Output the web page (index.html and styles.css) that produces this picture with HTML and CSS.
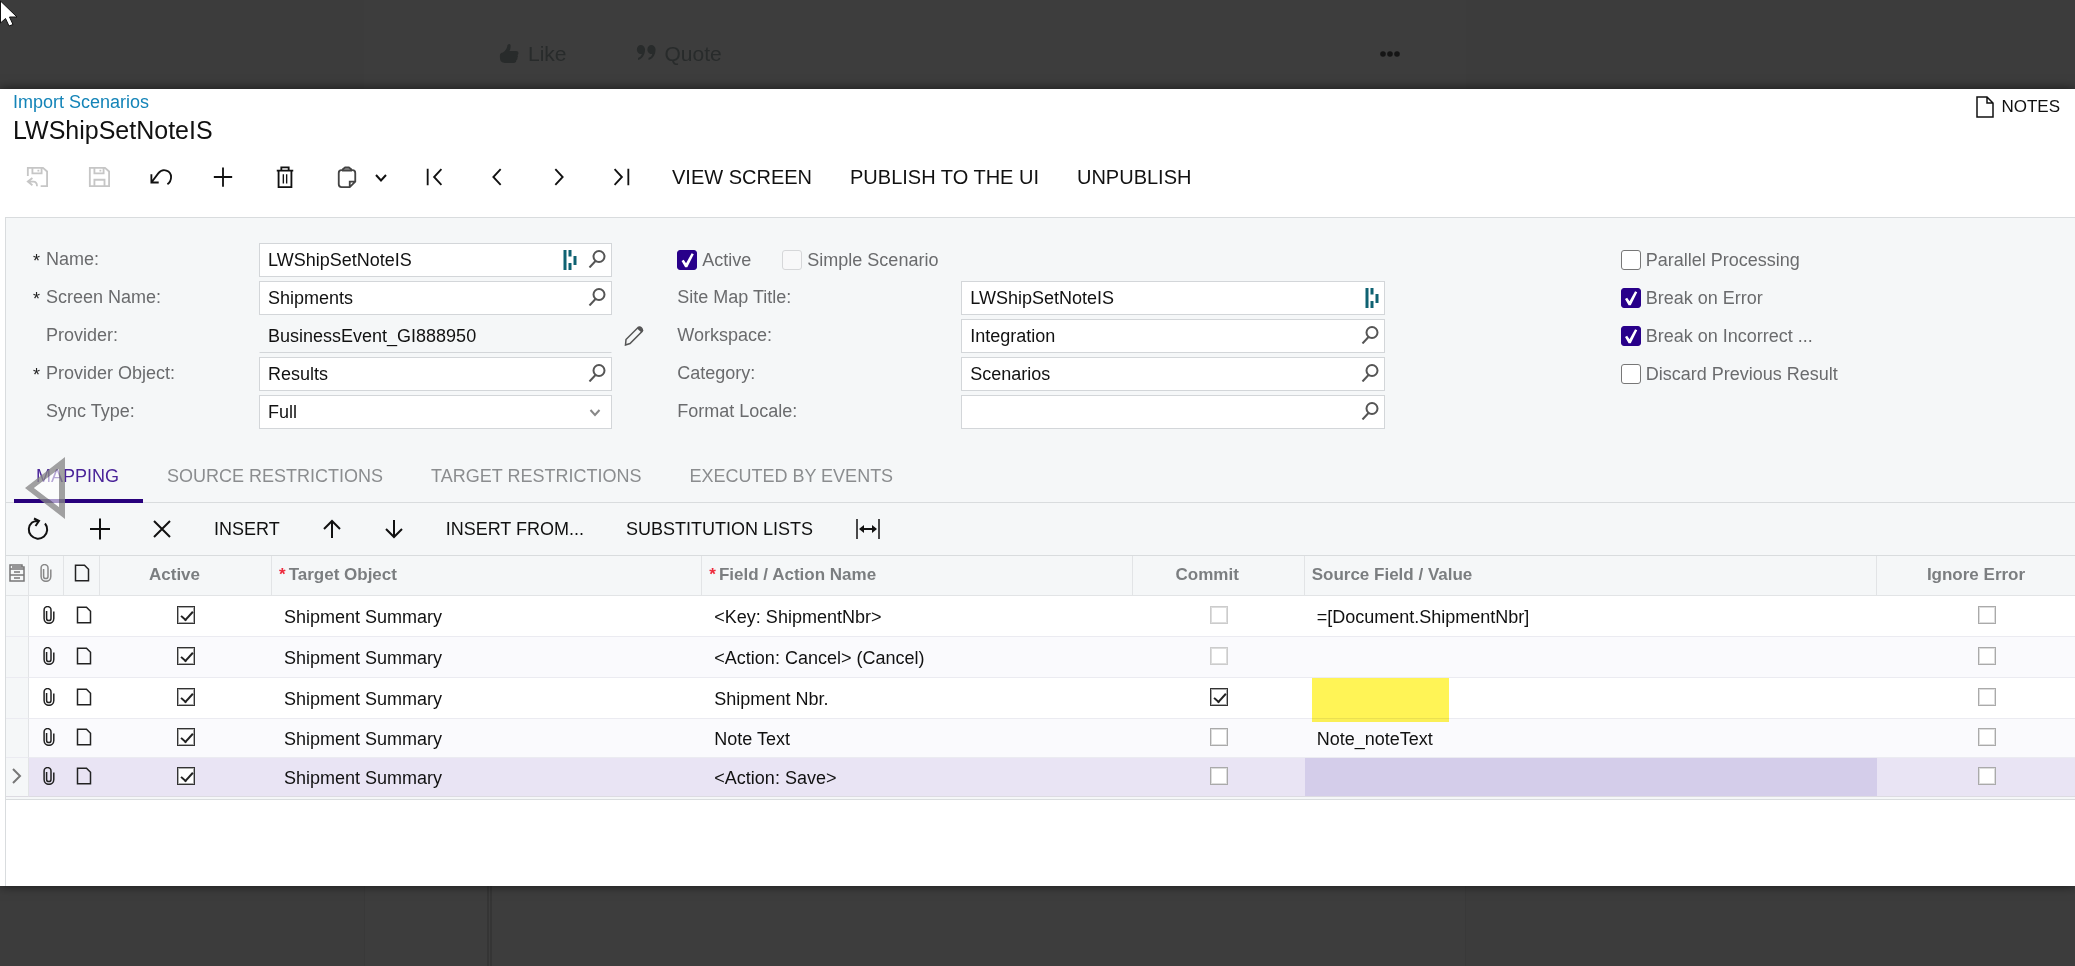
FILE: index.html
```html
<!DOCTYPE html>
<html lang="en">
<head>
<meta charset="utf-8">
<title>Import Scenarios - LWShipSetNoteIS</title>
<link rel="stylesheet" href="styles.css">
</head>
<body>
<svg class="sprite" aria-hidden="true">
  <symbol id="search" viewBox="0 0 18 18"><circle cx="11" cy="6.500" r="5.500"/><path d="M7.500 11 1.500 17.500"/></symbol>
  <symbol id="bars" viewBox="0 0 14 22"><path d="M2 1v20M7 1v6.500M7 14v7M12 7v9" /></symbol>
  <symbol id="clip" viewBox="0 0 12 18"><path d="M3.600 5v7.400a2.200 2.200 0 0 0 4.400 0V4a3.100 3.100 0 0 0-6.900 0v8.500a4.600 4.600 0 0 0 9.700 0V5.500"/></symbol>
  <symbol id="doc" viewBox="0 0 16 18"><path d="M1.500 1.200h9l4 4v11.600h-13z"/></symbol>
  <symbol id="plus" viewBox="0 0 24 24"><path d="M12 1.500v21M2 12h20"/></symbol>
  <symbol id="left" viewBox="0 0 24 24"><path d="M16 3.500 8 12l8 8.500"/></symbol>
  <symbol id="right" viewBox="0 0 24 24"><path d="m8 3.500 8 8.500-8 8.500"/></symbol>
</svg>

<header class="backdrop backdrop-top">
  <svg class="cursor" width="20" height="28" viewBox="0 0 20 28" aria-hidden="true"><path d="M.500 1v22l5-4.500 3.500 7.500 4-1.500-3.500-7.500h7.500z" fill="#fff" stroke="#111" stroke-width="1"/></svg>
  <div class="post">
    <button class="ghost"><svg width="20" height="20" viewBox="0 0 20 20"><path d="M1 11Q1 9 4 8.500 8 6 8.500 1q2-2 3 0 .5 3-1 6H17q2.500 0 2.500 2 0 1.500-1 2 1 1.500-.2 2.800.5 1.700-1 2.500 0 2.700-2.800 2.700H6Q0 19 1 11z"/></svg>Like</button>
    <button class="ghost"><svg width="20" height="20" viewBox="0 0 20 20"><path d="M4.500 1A4.500 4.500 0 0 1 9 6c0 5-3 9-7 10v-2c2-1 3.500-2 3.800-4A4.200 4.500 0 1 1 4.500 1zM15 1a4.500 4.500 0 0 1 4.500 5c0 5-3 9-7 10v-2c2-1 3.500-2 3.800-4A4.200 4.500 0 1 1 15 1z"/></svg>Quote</button>
    <button class="ghost more" aria-label="More"><svg width="20" height="6" viewBox="0 0 20 6"><circle cx="3" cy="3" r="2.800"/><circle cx="10" cy="3" r="2.800"/><circle cx="17" cy="3" r="2.800"/></svg></button>
  </div>
</header>

<main class="panel">
  <div class="heading">
    <div>
      <a class="crumb" href="#">Import Scenarios</a>
      <h1>LWShipSetNoteIS</h1>
    </div>
    <button class="notes"><svg width="18" height="22" viewBox="0 0 18 22"><path d="M1 1h10l6 6v14H1zM11 1v6h6"/></svg>NOTES</button>
  </div>

  <div class="toolbar" role="toolbar">
    <button class="tool" disabled aria-label="Save and close"><svg class="icon soft" viewBox="0 0 24 24"><path d="M2 11V2h16.500L23 6v16h-7M7 2v6h10V2M13.500 4v2M7 13l-5 4 5 4M2 17h6q4 0 4 5"/></svg></button>
    <button class="tool" disabled aria-label="Save"><svg class="icon soft" viewBox="0 0 24 24"><path d="M2 2h16.500L23 6v16H2zM7 2v6h10V2M13.500 4v2M7 22v-7h11v7"/></svg></button>
    <button class="tool" aria-label="Undo"><svg class="icon" viewBox="0 0 24 24"><path d="M1.500 9v9h8M1.500 18 9 8C14 1.500 23 5 23 12q0 5-4 8"/></svg></button>
    <button class="tool" aria-label="Add"><svg class="icon"><use href="#plus"/></svg></button>
    <button class="tool" aria-label="Delete"><svg class="icon" viewBox="0 0 24 24"><path d="M3 5h18M5 5v18h14V5M8 4V1.500h8V4"/><path d="M10.200 9v10M13.800 9v10" stroke-width="1.500"/></svg></button>
    <button class="tool split" aria-label="Clipboard"><svg class="icon gray" viewBox="0 0 24 24"><path d="M7.500 4.500H6q-3 0-3 3V20q0 3 3 3h9l6-6V7.500q0-3-3-3h-1.500M15 23v-6h6"/><path d="M7.500 5V3.500L10 1.500h4l2.500 2V5z" fill="#888"/></svg><svg width="16" height="16" viewBox="0 0 16 16"><path d="m3 6 5 5.500L13 6"/></svg></button>
    <button class="tool" aria-label="First"><svg class="icon" viewBox="0 0 24 24"><path d="M4 3v18M19 3.500 11 12l8 8.500"/></svg></button>
    <button class="tool" aria-label="Previous"><svg class="icon"><use href="#left"/></svg></button>
    <button class="tool" aria-label="Next"><svg class="icon"><use href="#right"/></svg></button>
    <button class="tool" aria-label="Last"><svg class="icon" viewBox="0 0 24 24"><path d="M20 3v18M5 3.500l8 8.500-8 8.500"/></svg></button>
    <div class="commands">
      <button>VIEW SCREEN</button>
      <button>PUBLISH TO THE UI</button>
      <button>UNPUBLISH</button>
    </div>
  </div>

  <section class="work">
    <form class="form">
      <div class="group first">
        <label class="required" for="name">Name:</label>
        <div class="field"><input id="name" value="LWShipSetNoteIS"><svg class="barsicon"><use href="#bars"/></svg><button type="button" aria-label="Find name"><svg class="find"><use href="#search"/></svg></button></div><span></span>
        <label class="required" for="screen">Screen Name:</label>
        <div class="field"><input id="screen" value="Shipments"><button type="button" aria-label="Find screen"><svg class="find"><use href="#search"/></svg></button></div><span></span>
        <label for="provider">Provider:</label>
        <div class="field plain"><input id="provider" value="BusinessEvent_GI888950" readonly></div>
        <button type="button" class="edit" aria-label="Edit provider"><svg width="20" height="20" viewBox="0 0 20 20"><path d="m2 13.500 12-12q2-1 3.500.500T18 5.500l-12 12L1.500 19z"/><path d="m14 1.500 4.500 4" stroke-width="3"/></svg></button>
        <label class="required" for="object">Provider Object:</label>
        <div class="field"><input id="object" value="Results"><button type="button" aria-label="Find object"><svg class="find"><use href="#search"/></svg></button></div><span></span>
        <label for="sync">Sync Type:</label>
        <div class="field"><select id="sync"><option>Full</option></select><svg class="drop" viewBox="0 0 14 14"><path d="m2.500 5 4.500 5 4.500-5"/></svg></div><span></span>
      </div>
      <div class="group second">
        <div class="checks">
          <label class="check"><input type="checkbox" checked>Active</label>
          <label class="check"><input type="checkbox" disabled>Simple Scenario</label>
        </div>
        <label for="site">Site Map Title:</label>
        <div class="field"><input id="site" value="LWShipSetNoteIS"><svg class="barsicon"><use href="#bars"/></svg></div>
        <label for="workspace">Workspace:</label>
        <div class="field"><input id="workspace" value="Integration"><button type="button" aria-label="Find workspace"><svg class="find"><use href="#search"/></svg></button></div>
        <label for="category">Category:</label>
        <div class="field"><input id="category" value="Scenarios"><button type="button" aria-label="Find category"><svg class="find"><use href="#search"/></svg></button></div>
        <label for="locale">Format Locale:</label>
        <div class="field"><input id="locale" value=""><button type="button" aria-label="Find locale"><svg class="find"><use href="#search"/></svg></button></div>
      </div>
      <div class="group third">
        <label class="check"><input type="checkbox">Parallel Processing</label>
        <label class="check"><input type="checkbox" checked>Break on Error</label>
        <label class="check"><input type="checkbox" checked>Break on Incorrect ...</label>
        <label class="check"><input type="checkbox">Discard Previous Result</label>
      </div>
    </form>

    <nav class="tabs">
      <button class="active">MAPPING</button>
      <button>SOURCE RESTRICTIONS</button>
      <button>TARGET RESTRICTIONS</button>
      <button>EXECUTED BY EVENTS</button>
      <svg class="pointer" width="42" height="64" viewBox="0 0 42 64" aria-hidden="true"><path d="M1 32 41 1v62zM10 32 35 51V13z" fill="#888" fill-opacity=".78" fill-rule="evenodd"/><path d="M10 32 35 13v38z" fill="#fff" fill-opacity=".6"/></svg>
    </nav>

    <div class="gridbar" role="toolbar">
      <button class="tool" aria-label="Refresh"><svg class="icon" viewBox="0 0 24 24"><path d="M6 5.500A9.200 9.200 0 1 0 19 6.500M8 1.500l5 2.500-3.500 5M13 4Q9 3.500 6 5.500"/></svg></button>
      <button class="tool" aria-label="Add row"><svg class="icon"><use href="#plus"/></svg></button>
      <button class="tool" aria-label="Delete row"><svg class="icon" viewBox="0 0 24 24"><path d="m4 4 16 16M20 4 4 20"/></svg></button>
      <button class="word">INSERT</button>
      <button class="tool" aria-label="Move up"><svg class="icon" viewBox="0 0 24 24"><path d="M12 21V4M4 12l8-8 8 8"/></svg></button>
      <button class="tool" aria-label="Move down"><svg class="icon" viewBox="0 0 24 24"><path d="M12 3v17M4 12l8 8 8-8"/></svg></button>
      <button class="word">INSERT FROM...</button>
      <button class="word joined">SUBSTITUTION LISTS</button>
      <button class="tool" aria-label="Fit columns"><svg class="icon fit" viewBox="0 0 24 24"><path d="M1 2v20M23 2v20" stroke-width="1.500"/><path d="M4 12h16"/><path d="m3 12 5-4v8zM21 12l-5-4v8z" fill="#111" stroke="none"/></svg></button>
    </div>

    <table class="grid">
      <colgroup><col class="c-sel"><col class="c-clip"><col class="c-doc"><col class="c-check"><col class="c-wide"><col class="c-wide"><col class="c-check"><col><col class="c-last"></colgroup>
      <thead>
        <tr>
          <th><svg width="16" height="18" viewBox="0 0 16 18" class="archive"><path d="M1 5V1h12v2M1 5h14v12H1zM3 3h12v2M1 11h14M5 8h6M5 14h6"/></svg></th>
          <th><svg class="clip muted"><use href="#clip"/></svg></th>
          <th><svg class="doc"><use href="#doc"/></svg></th>
          <th class="mid">Active</th>
          <th><span class="star">*</span>Target Object</th>
          <th><span class="star">*</span>Field / Action Name</th>
          <th class="mid">Commit</th>
          <th>Source Field / Value</th>
          <th class="mid last">Ignore Error</th>
        </tr>
      </thead>
      <tbody>
        <tr><td class="sel"></td><td class="ico"><svg class="clip"><use href="#clip"/></svg></td><td class="ico"><svg class="doc"><use href="#doc"/></svg></td><td class="box"><input type="checkbox" aria-label="Active" checked></td><td>Shipment Summary</td><td>&lt;Key: ShipmentNbr&gt;</td><td class="box"><input type="checkbox" aria-label="Commit" disabled></td><td>=[Document.ShipmentNbr]</td><td class="box end"><input type="checkbox" aria-label="Ignore error"></td></tr>
        <tr><td class="sel"></td><td class="ico"><svg class="clip"><use href="#clip"/></svg></td><td class="ico"><svg class="doc"><use href="#doc"/></svg></td><td class="box"><input type="checkbox" aria-label="Active" checked></td><td>Shipment Summary</td><td>&lt;Action: Cancel&gt; (Cancel)</td><td class="box"><input type="checkbox" aria-label="Commit" disabled></td><td></td><td class="box end"><input type="checkbox" aria-label="Ignore error"></td></tr>
        <tr><td class="sel"></td><td class="ico"><svg class="clip"><use href="#clip"/></svg></td><td class="ico"><svg class="doc"><use href="#doc"/></svg></td><td class="box"><input type="checkbox" aria-label="Active" checked></td><td>Shipment Summary</td><td>Shipment Nbr.</td><td class="box"><input type="checkbox" aria-label="Commit" checked></td><td class="marked"><span class="marker"></span></td><td class="box end"><input type="checkbox" aria-label="Ignore error"></td></tr>
        <tr><td class="sel"></td><td class="ico"><svg class="clip"><use href="#clip"/></svg></td><td class="ico"><svg class="doc"><use href="#doc"/></svg></td><td class="box"><input type="checkbox" aria-label="Active" checked></td><td>Shipment Summary</td><td>Note Text</td><td class="box"><input type="checkbox" aria-label="Commit"></td><td>Note_noteText</td><td class="box end"><input type="checkbox" aria-label="Ignore error"></td></tr>
        <tr class="current"><td class="sel"><svg width="12" height="18" viewBox="0 0 12 18"><path d="m2 2 7 7-7 7"/></svg></td><td class="ico"><svg class="clip"><use href="#clip"/></svg></td><td class="ico"><svg class="doc"><use href="#doc"/></svg></td><td class="box"><input type="checkbox" aria-label="Active" checked></td><td>Shipment Summary</td><td>&lt;Action: Save&gt;</td><td class="box"><input type="checkbox" aria-label="Commit"></td><td class="focus"></td><td class="box end"><input type="checkbox" aria-label="Ignore error"></td></tr>
      </tbody>
    </table>
    <div class="rest"></div>
  </section>
</main>

<footer class="backdrop backdrop-bottom"><div class="column"><div class="inner"></div></div></footer>
</body>
</html>
```

FILE: styles.css
```css
* { box-sizing: border-box; }

body {
  margin: 0;
  min-height: 100vh;
  display: flex;
  flex-direction: column;
  background: #3c3c3c;
  color: #111;
  font-family: "Liberation Sans", Arial, sans-serif;
  font-size: 18px;
}

button {
  margin: 0;
  padding: 0;
  border: 0;
  background: none;
  color: inherit;
  font: inherit;
  white-space: nowrap;
}

svg { display: block; fill: none; stroke: currentColor; stroke-width: 2; flex: none; }
.sprite { position: absolute; width: 0; height: 0; }

/* Dimmed page behind the panel */
.backdrop-top { height: 89px; padding-left: 364px; position: relative; }
.cursor { position: absolute; left: 0; top: 0; }
.post {
  width: 1102px;
  height: 89px;
  padding: 19px 66px 0 135px;
  display: flex;
  align-items: center;
  gap: 69px;
  background: #3d3d3d;
}
.ghost { display: flex; align-items: center; gap: 9px; font-size: 21px; color: #282b2b; }
.ghost svg { fill: currentColor; stroke: none; }
.more { margin-left: auto; color: #151515; }
.backdrop-bottom { flex: 1; padding-left: 364px; display: flex; }
.column { width: 1102px; padding-left: 122px; background: #3d3d3d; border: solid #393939; border-width: 0 1px; }
.inner { height: 100%; border-left: 5px double #353535; }

/* Panel */
.panel { position: relative; background: #fff; box-shadow: 0 0 10px rgba(0, 0, 0, .6); }
.heading { display: flex; justify-content: space-between; align-items: flex-start; padding: 2px 15px 0 13px; }
.crumb { display: block; line-height: 22px; color: #1484b8; text-decoration: none; }
h1 { margin: 0; font-size: 25px; font-weight: 400; line-height: 34px; }
.notes { display: flex; align-items: center; gap: 7px; margin-top: 5px; font-size: 17px; }
.notes svg { stroke-width: 1.500; }

.toolbar { display: flex; align-items: center; height: 54px; margin: 3px 0 13px 6px; font-size: 20px; }
.tool { width: 62px; height: 40px; display: flex; align-items: center; justify-content: center; }
.icon { width: 24px; height: 24px; }
.toolbar .icon { width: 22px; }
.soft { color: #c6c6c6; }
.gray { color: #444; }
.split { width: 88px; justify-content: flex-start; padding-left: 20px; gap: 15px; }
.commands { display: flex; gap: 38px; margin-left: 20px; }

.work { margin-left: 5px; border: solid #d9dcde; border-width: 1px 0 0 1px; background: #f5f7f8; }

/* Form */
.form { display: grid; grid-template-columns: 644fr 943fr 454fr; padding: 25px 0 19px 27px; color: #6a6b6d; }
.group { display: grid; grid-auto-rows: 34px; gap: 4px 0; align-content: start; }
.group > label { line-height: 33px; }
.first { grid-template-columns: 226px 1fr 65px; }
.first > label { padding-left: 13px; position: relative; }
.required::before { content: "*"; position: absolute; left: 0; top: 2px; color: #222; }
.second { grid-template-columns: 284px 1fr; padding-right: 236px; }
.field { display: flex; align-items: center; padding-right: 5px; border: 1px solid #d3d6d9; background: #fff; }
.field input, .field select {
  flex: 1;
  min-width: 0;
  height: 100%;
  padding: 0 0 0 8px;
  border: 0;
  outline: 0;
  background: none;
  color: #111;
  font: inherit;
  appearance: none;
}
.plain { background: none; border-color: transparent transparent #d3d6d9; }
.barsicon { width: 14px; height: 22px; color: #0f6272; stroke-width: 3; }
.find { width: 18px; height: 18px; margin-bottom: 3px; color: #555; }
.barsicon + button { margin-left: 11px; }
.drop { width: 14px; height: 14px; margin-right: 4px; color: #888; }
.edit { justify-self: start; margin-left: 12px; color: #555; }
.edit svg { stroke-width: 1.500; }
.checks { grid-column: 1 / -1; display: flex; gap: 31px; }
.check { display: flex; align-items: center; gap: 5px; }
.check input {
  appearance: none;
  width: 20px;
  height: 20px;
  margin: 0;
  border: 1px solid #777;
  border-radius: 3px;
  background: #fff;
}
.check input:checked { border-color: #28008a; background: #28008a; }
.check input:checked::before {
  content: "";
  display: block;
  width: 18px;
  height: 18px;
  background: #fff;
  clip-path: polygon(18% 55%, 30% 48%, 43% 68%, 74% 12%, 86% 18%, 50% 90%, 38% 90%);
}
.check input:disabled { border-color: #d6d7d9; background: #f8f8f9; }

/* Tabs */
.tabs { position: relative; display: flex; height: 55px; padding-left: 8px; border-bottom: 1px solid #d9dcde; }
.tabs button { padding: 6px 24px 0; margin-bottom: -1px; border-bottom: 4px solid transparent; color: #8b8d8f; }
.tabs .active { padding-left: 22px; border-color: #28007c; color: #4a2399; }
.pointer { position: absolute; left: 18px; top: 8px; stroke: none; }

.gridbar { display: flex; align-items: center; height: 53px; padding-left: 1px; border-bottom: 1px solid #d9dcde; }
.word { margin: 0 21px; }
.joined { margin-right: 24px; }

/* Mapping table */
.grid { width: 100%; table-layout: fixed; border-collapse: separate; border-spacing: 0; background: #fff; }
.c-sel { width: 23px; }
.c-clip { width: 35px; }
.c-doc { width: 36px; }
.c-check { width: 172px; }
.c-wide { width: 20.8%; }
.c-last { width: 198px; }
.grid th {
  height: 40px;
  padding: 0 0 2px 7px;
  background: #f5f7f8;
  border: solid #e2e4e6;
  border-width: 0 1px 1px 0;
  color: #7b7e80;
  font-size: 17px;
  text-align: left;
}
.grid th:nth-child(-n+3) { padding: 0 0 6px; }
.grid th:nth-child(-n+3) svg { margin: 0 auto; }
.grid th.mid { padding-right: 22px; padding-left: 0; text-align: center; }
.grid th.last { padding-right: 0; border-right: 0; }
.star { margin-right: 3px; color: #ee2a3c; }
.archive { color: #777; stroke-width: 1.500; }
.grid td { height: 41px; padding: 2px 0 0 12px; border-bottom: 1px solid #ebebf1; white-space: nowrap; }
.grid tbody tr:nth-child(even) td { background: #fafafd; }
.grid tbody tr:nth-last-child(-n+2) td { height: 39px; }
.grid tbody tr .sel, .grid tbody tr:nth-child(even) .sel { padding: 0 0 2px 5px; background: #f5f7f8; border-right: 1px solid #e2e4e6; color: #777; }
.grid .ico { padding: 0 0 2px 4px; }
.grid .ico svg { margin: 0 auto; }
.clip { width: 12px; height: 18px; stroke-width: 1.500; color: #222; }
.muted { color: #888; }
.doc { width: 16px; height: 18px; color: #222; stroke-width: 1.500; }
.grid .box { padding: 0 0 3px; text-align: center; }
.grid .end { padding-left: 21px; }
.box input {
  appearance: none;
  display: block;
  width: 18px;
  height: 18px;
  margin: 0 auto;
  border: 1px solid #aaa;
  background: #fff;
  box-shadow: inset 0 0 0 1px #ddd;
}
.box input:disabled { border-color: #ccc; }
.box input:checked { border-color: #333; box-shadow: inset 0 0 0 1px #aaa; }
.box input:checked::before {
  content: "";
  display: block;
  width: 10px;
  height: 5px;
  margin: 4px 0 0 3px;
  border: solid #222;
  border-width: 0 0 2px 2px;
  transform: rotate(-48deg);
}
.marked { position: relative; }
.marker { position: absolute; left: 7px; top: 0; z-index: 1; width: 137px; height: 44px; background: #fff456; mix-blend-mode: multiply; }
.grid .current td { background: #e9e4f4; border-color: #dddbe2; }
.grid .current .focus { background: #d4cdea; }
.rest { height: 87px; margin-top: 2px; border-top: 1px solid #d9dcde; background: #fff; }
```
